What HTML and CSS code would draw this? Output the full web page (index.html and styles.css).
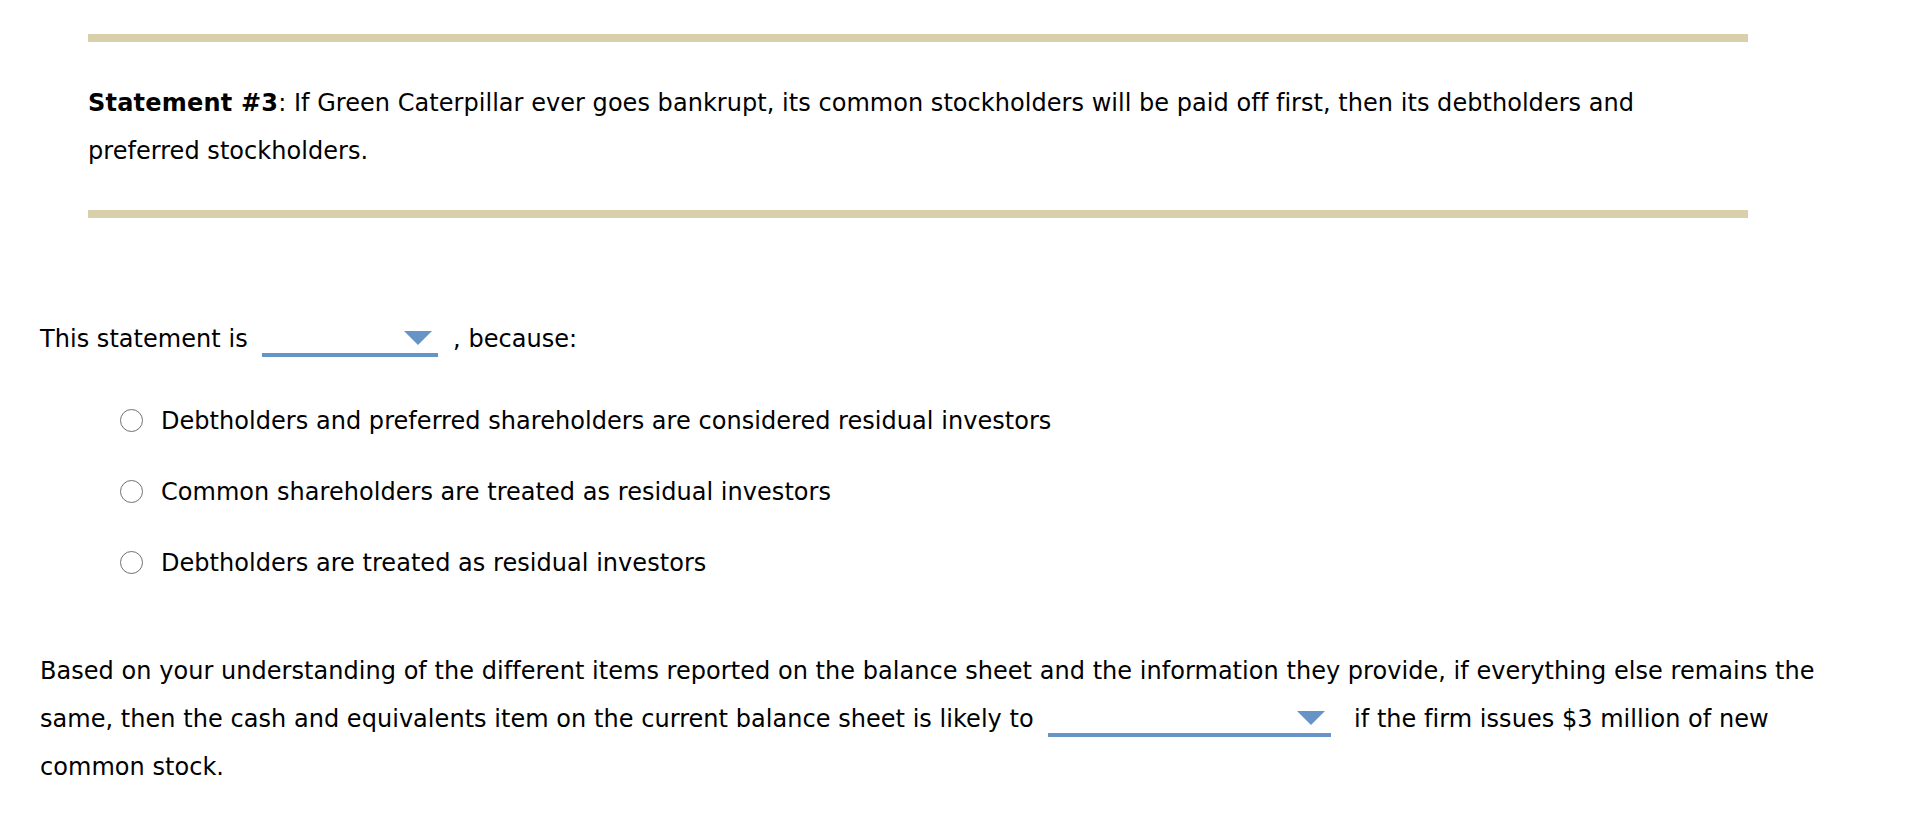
FILE: index.html
```html
<!DOCTYPE html>
<html>
<head>
<meta charset="utf-8">
<link rel="stylesheet" href="styles.css">
</head>
<body>
<div class="page">
  <div class="statement">
    <p class="statement-text"><strong>Statement #3</strong>: If Green Caterpillar ever goes bankrupt, its common stockholders will be paid off first, then its debtholders and preferred stockholders.</p>
  </div>

  <p class="prompt">This statement is <span class="dropdown dd-short"><span class="caret"></span></span> , because:</p>

  <ul class="options">
    <li class="option"><span class="radio"></span><span>Debtholders and preferred shareholders are considered residual investors</span></li>
    <li class="option"><span class="radio"></span><span>Common shareholders are treated as residual investors</span></li>
    <li class="option"><span class="radio"></span><span>Debtholders are treated as residual investors</span></li>
  </ul>

  <p class="para">Based on your understanding of the different items reported on the balance sheet and the information they provide, if everything else remains the same, then the cash and equivalents item on the current balance sheet is likely to <span class="dropdown dd-long"><span class="caret"></span></span> if the firm issues $3 million of new common stock.</p>
</div>
</body>
</html>
```

FILE: styles.css
```css
html, body {
  margin: 0;
  padding: 0;
  background: #ffffff;
}

body {
  font-family: "DejaVu Sans", Verdana, sans-serif;
  font-size: 24px;
  letter-spacing: 0.04px;
  color: #000000;
}

.page {
  padding: 34px 80px 0 40px;
}

.statement {
  margin-left: 48px;
  width: 1660px;
  border-top: 8px solid #d9cfaa;
  border-bottom: 8px solid #d9cfaa;
  padding: 37px 0 35px;
}

.statement-text {
  margin: 0;
  line-height: 48px;
  padding-right: 40px;
}

.statement-text strong {
  font-weight: bold;
  letter-spacing: 0.2px;
}

.prompt {
  margin: 97px 0 0;
  line-height: 48px;
}

.dropdown {
  display: inline-block;
  position: relative;
  vertical-align: baseline;
  height: 24px;
  border-bottom: 4px solid #6694c6;
  margin: 0 7px 0 7px;
  top: 10px;
}

.dd-short {
  width: 176px;
}

.dd-long {
  width: 283px;
  margin-right: 15px;
}

.caret {
  position: absolute;
  right: 6px;
  top: 2px;
  width: 0;
  height: 0;
  border-left: 14px solid transparent;
  border-right: 14px solid transparent;
  border-top: 14px solid #6694c6;
}

.options {
  list-style: none;
  margin: 22px 0 0;
  padding: 0 0 0 80px;
}

.option {
  display: flex;
  align-items: center;
  height: 71px;
  gap: 18px;
}

.radio {
  width: 21px;
  height: 21px;
  border: 1.5px solid #707070;
  border-radius: 50%;
  background: #ffffff;
  flex: none;
}

.para {
  margin: 49px 0 0;
  line-height: 48px;
}
```
